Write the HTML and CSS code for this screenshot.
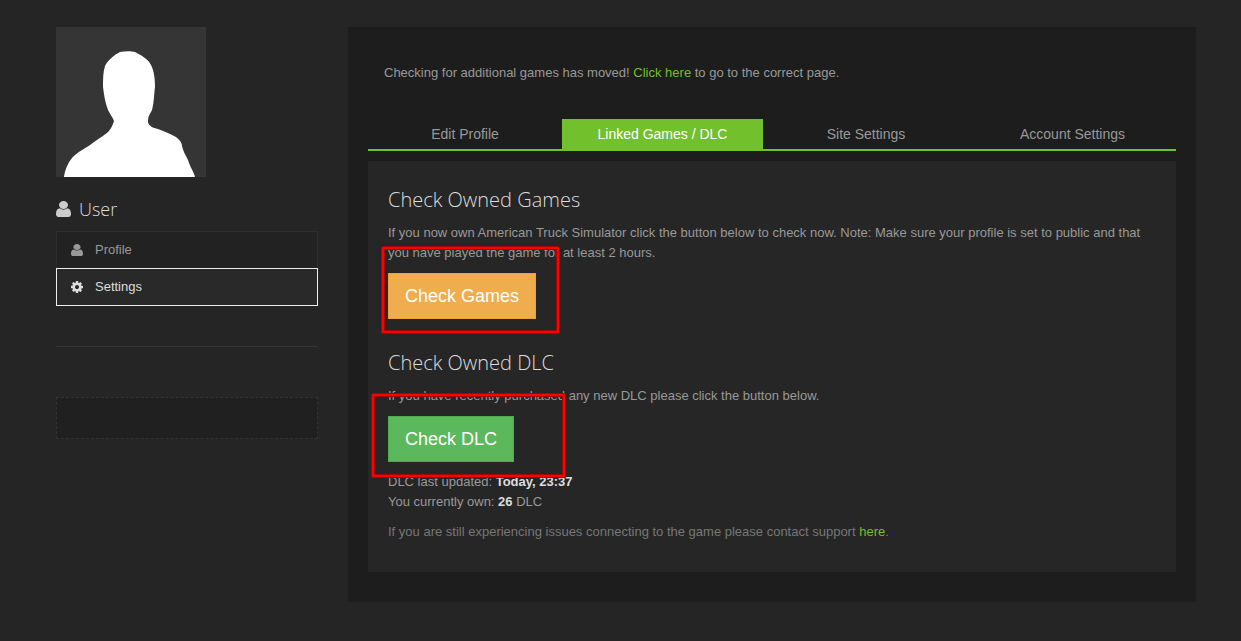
FILE: index.html
```html
<!DOCTYPE html>
<html lang="en">

<head>
  <meta charset="UTF-8">
  <meta name="viewport" content="width=device-width, initial-scale=1.0">
  <title>Settings - Linked Games / DLC</title>
  <link rel="stylesheet" href="styles.css">
</head>

<body>
  <svg class="icon-defs" aria-hidden="true">
    <symbol id="icon-user" viewBox="0 0 1280 1536" preserveAspectRatio="none">
      <path d="M1280 1271q0 109-62.500 187t-150.500 78H213q-88 0-150.500-78T0 1271q0-85 8.500-160.500t31.500-152 58.500-131 94-89T327 704q131 128 313 128t313-128q76 0 134.500 34.500t94 89 58.500 131 31.500 152 8.500 160.500zm-256-887q0 159-112.500 271.500T640 768 368.500 655.500 256 384t112.500-271.500T640 0t271.500 112.500T1024 384z" />
    </symbol>
    <symbol id="icon-cog" viewBox="0 0 1536 1536">
      <path d="M1024 768q0-106-75-181t-181-75-181 75-75 181 75 181 181 75 181-75 75-181zm512-109v222q0 12-8 23t-20 13l-185 28q-19 54-39 91 35 50 107 138 10 12 10 25t-9 23q-27 37-99 108t-94 71q-12 0-26-9l-138-108q-44 23-91 38-16 136-29 186-7 28-36 28H657q-14 0-24.500-8.500T621 1506l-28-184q-49-16-90-37l-141 107q-10 9-25 9-14 0-25-11-126-114-165-168-7-10-7-23 0-12 8-23 15-21 51-66.500t54-70.500q-27-50-41-99L29 913q-13-2-21-12.500T0 877V655q0-12 8-23t19-13l186-28q14-46 39-92-40-57-107-138-10-12-10-24 0-10 9-23 26-36 98.500-107.500T337 135q13 0 26 10l138 107q44-23 91-38 16-136 29-186 7-28 36-28h222q14 0 24.500 8.500T915 30l28 184q49 16 90 37l142-107q9-9 24-9 13 0 25 10 129 119 165 170 7 8 7 22 0 12-8 23-15 21-51 66.500t-54 70.500q26 50 41 98l183 28q13 2 21 12.500t8 23.500z" />
    </symbol>
  </svg>

  <div class="container">
    <aside class="sidebar">
      <svg class="avatar" viewBox="0 0 150 150" role="img" aria-label="User avatar">
        <path d="M8 150C9 142 13 133 19 128C25 123 32 120 38 115C44 111 50 107 53 104C55 102 57 97 58 94C57 91 54 87 52 83C49 75 48 68 47 60C47 52 47 45 49 39C52 33 58 28 64 25C69 24 75 24 79 25C85 28 92 32 95 38C98 44 99 51 99 60C98 67 98 76 96 83C94 87 92 89 92 95C93 99 97 101 102 102C108 104 114 107 118 109C122 111 126 115 126 119C127 124 130 129 132 133C134 140 138 145 139 150Z" />
      </svg>
      <h2 class="user-name">
        <svg class="user-icon"><use href="#icon-user" /></svg>User
      </h2>
      <nav class="side-menu">
        <a href="#"><svg class="menu-icon"><use href="#icon-user" /></svg>Profile</a>
        <a href="#" class="active"><svg class="menu-icon"><use href="#icon-cog" /></svg>Settings</a>
      </nav>
      <hr>
      <div class="placeholder"></div>
    </aside>

    <main class="main">
      <p class="notice">Checking for additional games has moved! <a href="#">Click here</a> to go to the correct page.</p>

      <nav class="tabs">
        <a href="#">Edit Profile</a>
        <a href="#" class="active">Linked Games / DLC</a>
        <a href="#">Site Settings</a>
        <a href="#">Account Settings</a>
      </nav>

      <div class="tab-content">
        <section>
          <h3>Check Owned Games</h3>
          <p>If you now own American Truck Simulator click the button below to check now. Note: Make sure your profile is set to public and that you have played the game for at least 2 hours.</p>
          <div class="action">
            <button type="button" class="btn btn-warning">Check Games</button>
            <span class="marker marker-games"></span>
          </div>
        </section>

        <section>
          <h3>Check Owned DLC</h3>
          <p>If you have recently purchased any new DLC please click the button below.</p>
          <div class="action">
            <button type="button" class="btn btn-success">Check DLC</button>
            <span class="marker marker-dlc"></span>
          </div>
          <p>DLC last updated: <strong>Today, 23:37</strong><br>You currently own: <strong>26</strong> DLC</p>
          <p class="support">If you are still experiencing issues connecting to the game please contact support <a href="#">here</a>.</p>
        </section>
      </div>
    </main>
  </div>
</body>

</html>
```
FILE: styles.css
```css
:root {
  --bg-color: #252525;
  --panel-color: #1d1d1d;
  --box-color: #262626;
  --text-color: #999999;
  --green: #72c02c;
}

* {
  box-sizing: border-box;
}

body {
  background-color: var(--bg-color);
  color: var(--text-color);
  font-family: "Liberation Sans", Arial, sans-serif;
  font-size: 13px;
  line-height: 20px;
  margin: 0;
}

h2,
h3 {
  color: #dddddd;
  font-family: "Open Sans", Arial, sans-serif;
  font-weight: 300;
  line-height: 24px;
  margin: 0 0 10px;
}

p {
  margin: 0 0 10px;
}

a {
  color: var(--green);
  text-decoration: none;
}

strong {
  color: #dddddd;
}

.icon-defs {
  display: none;
}

.container {
  display: grid;
  gap: 30px;
  grid-template-columns: 262px 1fr;
  padding: 27px 45px 39px 56px;
}

/* Sidebar */
.avatar {
  background-color: #353535;
  display: block;
  fill: #ffffff;
  height: 150px;
  width: 150px;
}

.user-name {
  align-items: center;
  display: flex;
  font-size: 18px;
  gap: 8px;
  margin: 20px 0 10px;
}

.user-icon {
  fill: #cccccc;
  height: 16px;
  width: 15px;
}

.side-menu a {
  align-items: center;
  background-color: #222222;
  border: 1px solid #2e2e2e;
  border-bottom: 0;
  color: var(--text-color);
  display: flex;
  gap: 12px;
  height: 37px;
  padding: 0 14px;
}

.side-menu a.active {
  background-color: #292929;
  border: 1px solid #eeeeee;
  color: #dddddd;
  height: 38px;
}

.menu-icon {
  fill: currentColor;
  height: 12px;
  width: 12px;
}

hr {
  border: 0;
  border-top: 1px solid #333333;
  margin: 40px 0 50px;
}

.placeholder {
  background-color: #202020;
  border: 1px dashed #333333;
  height: 42px;
}

/* Main panel */
.main {
  background-color: var(--panel-color);
  padding: 20px 20px 30px;
}

.notice {
  margin: 0;
  padding: 16px 16px 36px;
}

.tabs {
  border-bottom: 2px solid var(--green);
  display: grid;
  grid-template-columns: 194fr 201fr 206fr 207fr;
  margin-bottom: 10px;
}

.tabs a {
  color: var(--text-color);
  font-size: 14px;
  padding: 5px 15px;
  text-align: center;
}

.tabs a.active {
  background-color: var(--green);
  color: #ffffff;
}

.tab-content {
  background-color: var(--box-color);
  padding: 28px 20px 20px;
}

.tab-content h3 {
  font-size: 20px;
  line-height: 22px;
  margin-bottom: 12px;
}

.tab-content section + section {
  margin-top: 33px;
}

.action {
  margin-bottom: 10px;
  position: relative;
}

.btn {
  border: 1px solid;
  color: #ffffff;
  display: block;
  font-family: inherit;
  font-size: 18px;
  line-height: 24px;
  padding: 10px 16px;
}

.btn-warning {
  background-color: #f0ad4e;
  border-color: #eea236;
}

.btn-success {
  background-color: #5cb85c;
  border-color: #4cae4c;
}

.support {
  color: #777777;
}

/* Red outlines drawn over the buttons */
.marker {
  border: 2px solid #ff0000;
  border-radius: 1px;
  box-shadow: 0 0 0 1px #a00808, inset 0 0 0 1px #a00808;
  pointer-events: none;
  position: absolute;
}

.marker-games {
  height: 86px;
  left: -6px;
  top: -26px;
  width: 177px;
}

.marker-dlc {
  height: 83px;
  left: -16px;
  top: -22px;
  width: 193px;
}
```
